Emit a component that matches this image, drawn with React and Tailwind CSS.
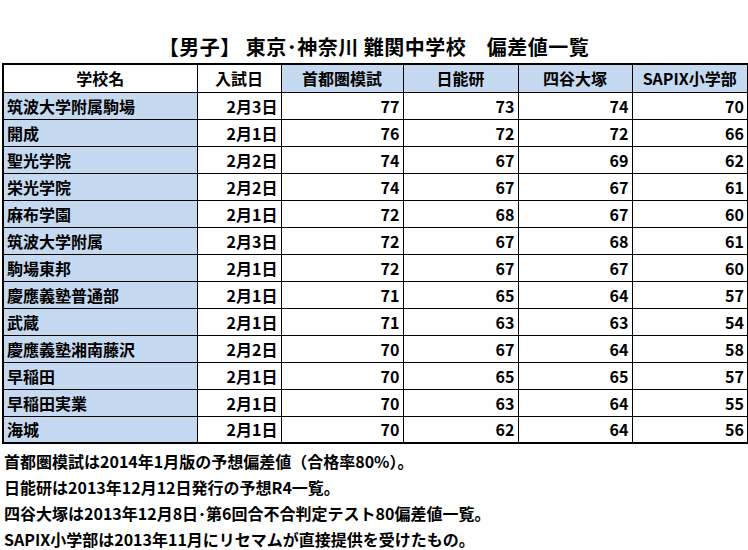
const COLUMNS = [
  { label: '学校名', width: 'w-[194px]', blue: false },
  { label: '入試日', width: 'w-[84px]', blue: false },
  { label: '首都圏模試', width: 'w-[122px]', blue: true },
  { label: '日能研', width: 'w-[115px]', blue: true },
  { label: '四谷大塚', width: 'w-[114px]', blue: true },
  { label: 'SAPIX小学部', width: 'w-[116px]', blue: true },
];

const ROWS = [
  ['筑波大学附属駒場', '2月3日', 77, 73, 74, 70],
  ['開成', '2月1日', 76, 72, 72, 66],
  ['聖光学院', '2月2日', 74, 67, 69, 62],
  ['栄光学院', '2月2日', 74, 67, 67, 61],
  ['麻布学園', '2月1日', 72, 68, 67, 60],
  ['筑波大学附属', '2月3日', 72, 67, 68, 61],
  ['駒場東邦', '2月1日', 72, 67, 67, 60],
  ['慶應義塾普通部', '2月1日', 71, 65, 64, 57],
  ['武蔵', '2月1日', 71, 63, 63, 54],
  ['慶應義塾湘南藤沢', '2月2日', 70, 67, 64, 58],
  ['早稲田', '2月1日', 70, 65, 65, 57],
  ['早稲田実業', '2月1日', 70, 63, 64, 55],
  ['海城', '2月1日', 70, 62, 64, 56],
];

const NOTES = [
  '首都圏模試は2014年1月版の予想偏差値（合格率80%）。',
  '日能研は2013年12月12日発行の予想R4一覧。',
  '四谷大塚は2013年12月8日･第6回合不合判定テスト80偏差値一覧。',
  'SAPIX小学部は2013年11月にリセマムが直接提供を受けたもの。',
];

export default function App() {
  return (
    <div className="w-[748px] h-[550px] bg-white font-['Noto_Sans_CJK_JP',sans-serif] font-bold text-black">
      <h1 className="pt-[34px] h-[63px] text-center text-[20px] leading-[26px] tracking-[0.5px]">
        【男子】 東京･神奈川 難関中学校　偏差値一覧
      </h1>
      <div className="pl-[2px]">
        <table className="w-[745px] table-fixed border-collapse border-2 border-black text-[16px]">
          <thead>
            <tr className="h-[28px]">
              {COLUMNS.map((col) => (
                <th
                  key={col.label}
                  className={`${col.width} border border-black p-0 text-center font-bold leading-none ${
                    col.blue ? 'bg-[#c5d9f1]' : 'bg-white'
                  }`}
                >
                  {col.label}
                </th>
              ))}
            </tr>
          </thead>
          <tbody>
            {ROWS.map((row) => (
              <tr key={row[0]} className="h-[27px]">
                <td className="border border-black bg-[#c5d9f1] px-[3px] py-0 leading-none">{row[0]}</td>
                {row.slice(1).map((cell, i) => (
                  <td key={i} className="border border-black px-[3px] py-0 text-right leading-none">
                    {cell}
                  </td>
                ))}
              </tr>
            ))}
          </tbody>
        </table>
      </div>
      <div className="pt-[4px] pl-[4px] text-[16px] leading-[26px]">
        {NOTES.map((note) => (
          <p key={note}>{note}</p>
        ))}
      </div>
    </div>
  );
}
